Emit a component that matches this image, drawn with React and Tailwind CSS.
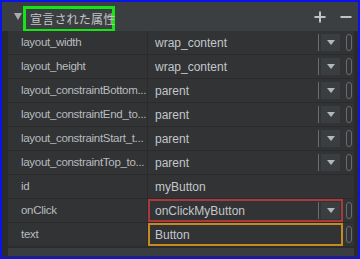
const rows = [
  { name: "layout_width", value: "wrap_content", dropdown: true },
  { name: "layout_height", value: "wrap_content", dropdown: true },
  { name: "layout_constraintBottom...", value: "parent", dropdown: true },
  { name: "layout_constraintEnd_to...", value: "parent", dropdown: true },
  { name: "layout_constraintStart_t...", value: "parent", dropdown: true },
  { name: "layout_constraintTop_to...", value: "parent", dropdown: true },
  { name: "id", value: "myButton", dropdown: false, noPill: true },
  { name: "onClick", value: "onClickMyButton", dropdown: true, box: "border-[#a8393d]" },
  { name: "text", value: "Button", dropdown: false, box: "border-[#c88a1e]" },
];

const Pill = () => (
  <div className="w-[6px] h-[17px] rounded-full border border-[#6a6d70]"></div>
);

export default function App() {
  return (
    <div
      className="w-[360px] h-[259px] border-2 border-[#0a14e6] bg-[#2b2d2f] flex flex-col overflow-hidden"
      style={{ fontFamily: '"Liberation Sans", "Noto Sans CJK JP", sans-serif' }}
    >
      <div className="h-[29px] bg-[#3c3f41] flex items-center shrink-0">
        <svg className="ml-[12px]" width="8" height="7" viewBox="0 0 8 7">
          <path d="M0 0H8L4 7Z" fill="#a9acaf" />
        </svg>
        <div className="ml-[1px] mt-[4px] h-[26px] w-[92px] border-[3px] border-[#17e317] flex items-center pl-[4px]">
          <span className="text-[12px] text-[#c3c6c9] leading-none whitespace-nowrap tracking-[0.2px] [font-family:'Noto_Sans_CJK_JP',sans-serif]">
            宣言された属性
          </span>
        </div>
        <div className="ml-auto flex items-center gap-[14px] mr-[6px]">
          <svg width="12" height="12" viewBox="0 0 12 12">
            <path d="M6 0.5V11.5M0.5 6H11.5" stroke="#c0c3c6" strokeWidth="2" />
          </svg>
          <svg width="12" height="12" viewBox="0 0 12 12">
            <path d="M0.5 6H11.5" stroke="#c0c3c6" strokeWidth="2" />
          </svg>
        </div>
      </div>
      <div className="flex flex-col pl-[6px] pr-[4px] bg-[#2b2b2d] flex-1">
        {rows.map((r) => (
          <div key={r.name} className="h-[24px] flex bg-[#313335] border-b border-[#2b2b2b] shrink-0">
            <div className="w-[140px] border-r border-[#2b2b2b] flex items-center pl-[13px] text-[11.5px] tracking-[-0.3px] text-[#b9bcbf] whitespace-nowrap overflow-hidden">
              {r.name}
            </div>
            <div
              className={`w-[195px] flex items-center ${r.box ? `border-2 ${r.box} pl-[5px]` : "pl-[7px]"}`}
            >
              <span className="text-[12px] text-[#c4c7ca] flex-1 whitespace-nowrap">{r.value}</span>
              {r.dropdown && (
                <div className={`flex items-center h-[17px] ${r.box ? "mr-[1px]" : "mr-[3px]"}`}>
                  <div className="w-px h-[17px] bg-[#6a6d70]"></div>
                  <div className="ml-[2px] w-[19px] h-[17px] bg-[#3b3e41] flex items-center justify-center">
                    <svg width="8" height="5" viewBox="0 0 8 5">
                      <path d="M0 0H8L4 5Z" fill="#b6b9bc" />
                    </svg>
                  </div>
                </div>
              )}
            </div>
            <div className="flex-1 flex items-center justify-center">
              {!r.noPill && <Pill />}
            </div>
          </div>
        ))}
        <div className="mt-[1px] h-[8px] bg-[#3a3d40]"></div>
      </div>
    </div>
  );
}
